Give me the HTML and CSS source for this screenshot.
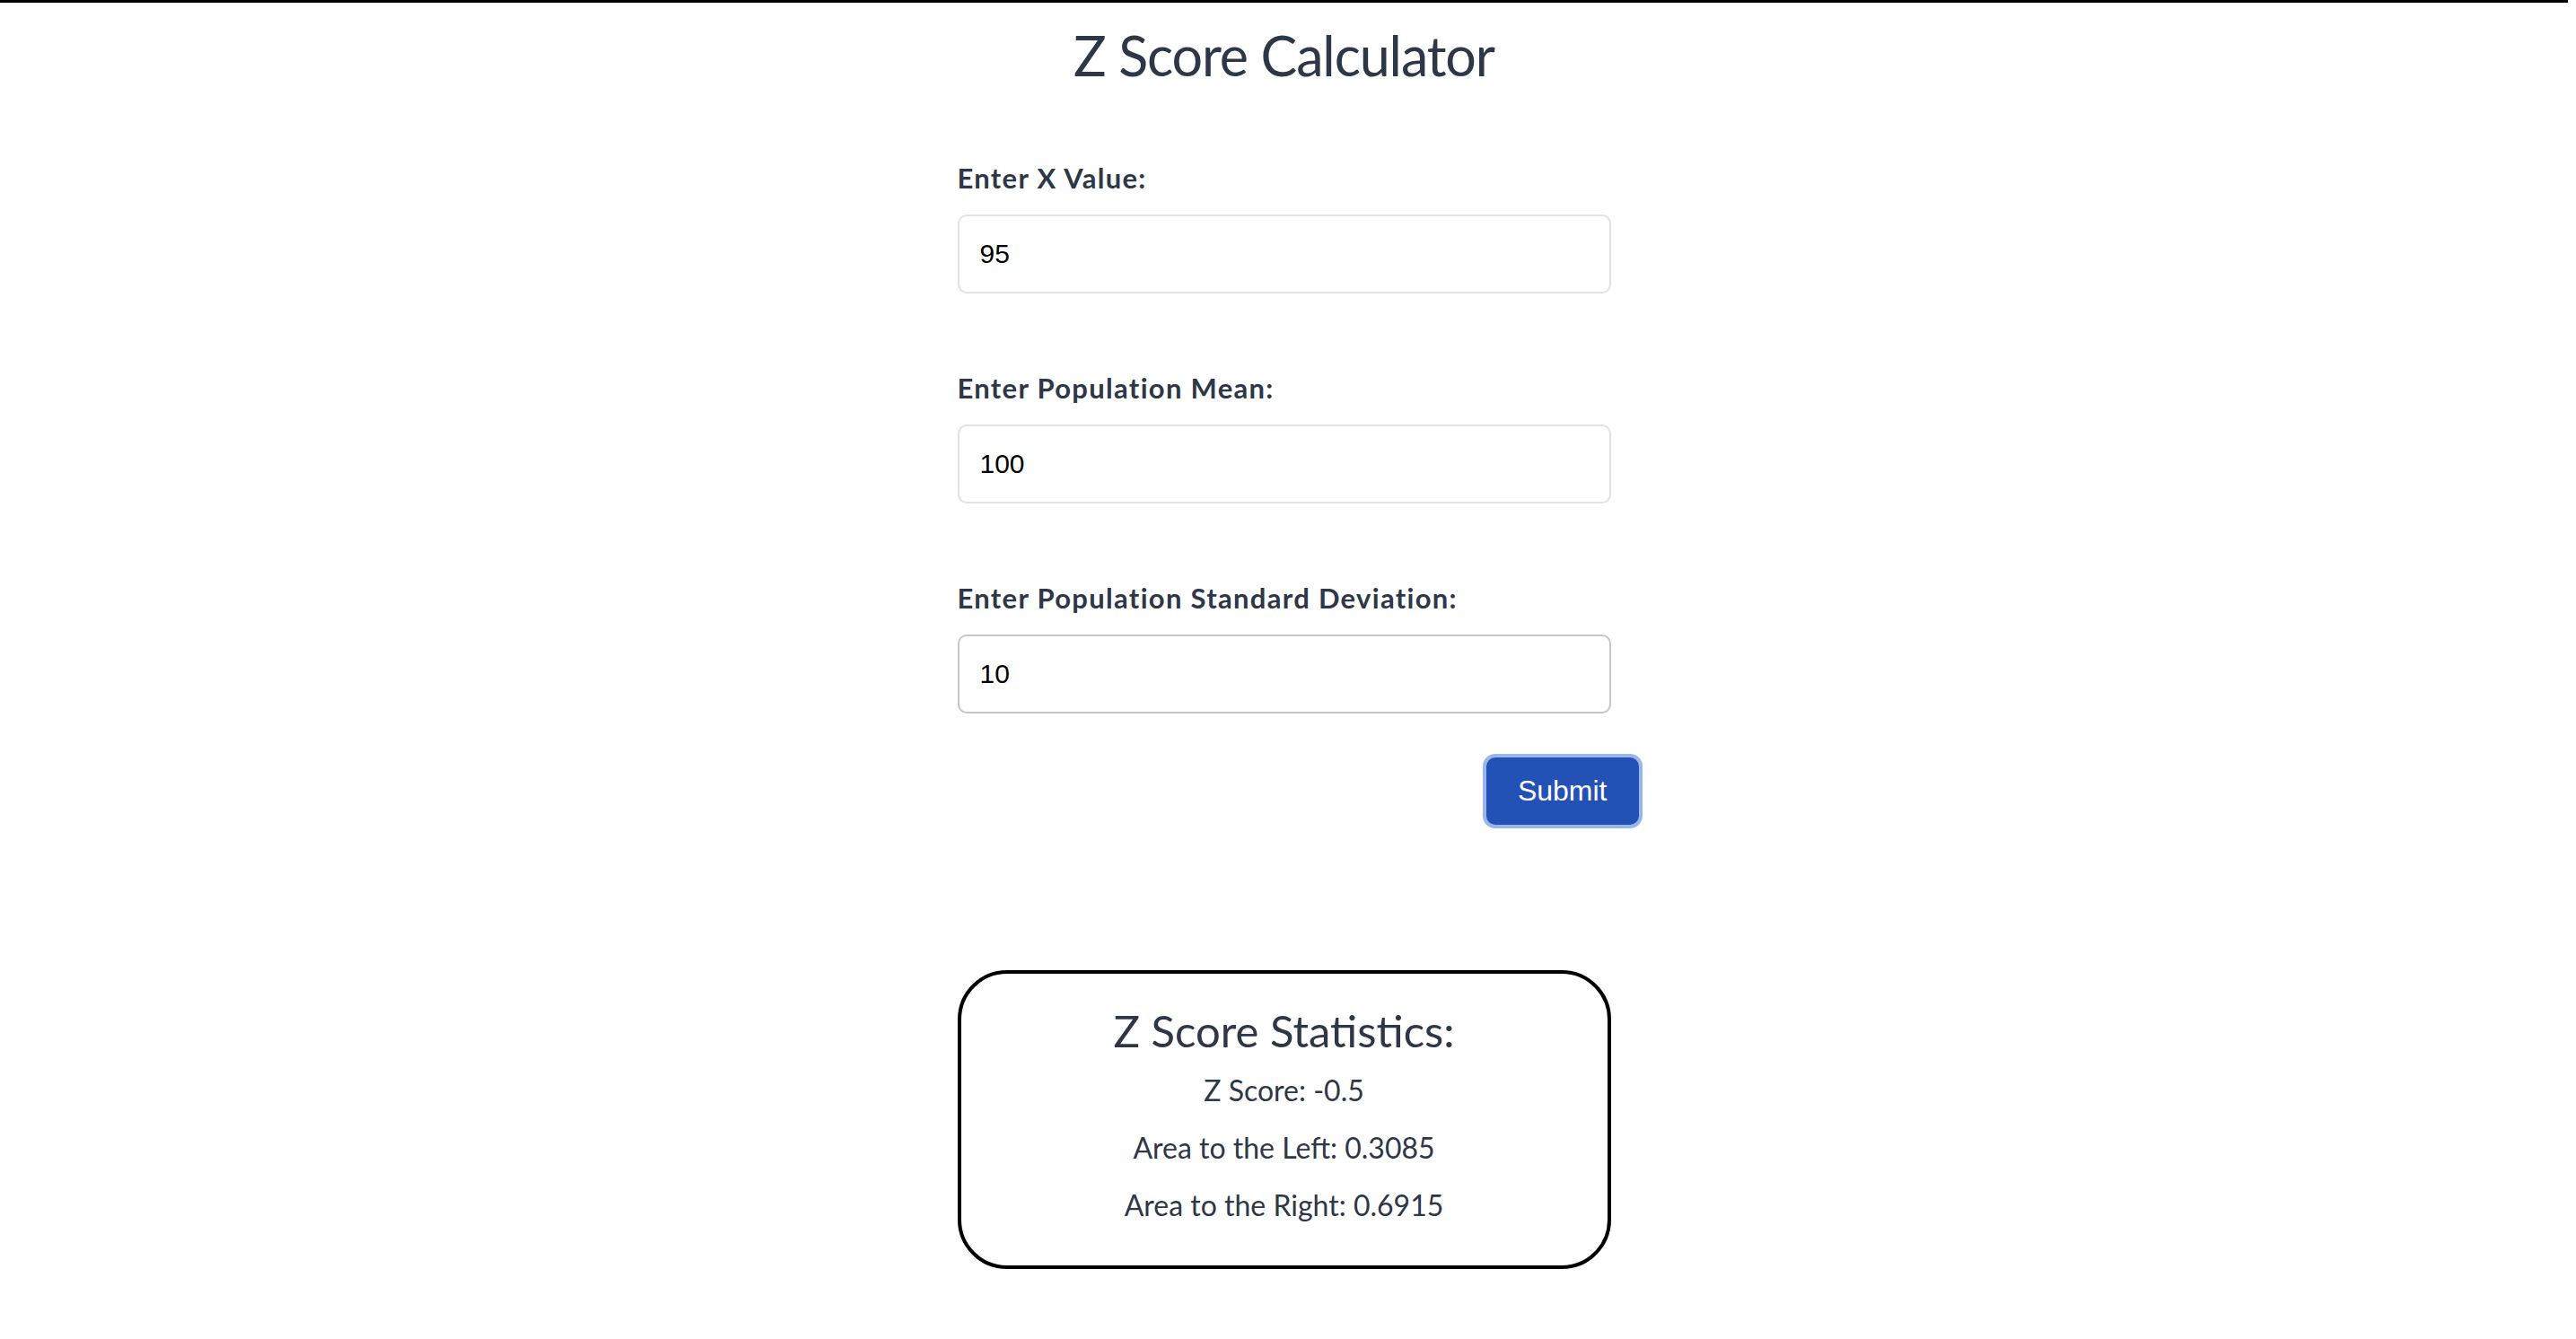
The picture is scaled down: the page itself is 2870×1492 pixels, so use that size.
FILE: index.html
```html
<!DOCTYPE html>
<html lang="en">
<head>
<meta charset="utf-8">
<title>Z Score Calculator</title>
<link rel="stylesheet" href="styles.css">
</head>
<body>
<div class="topbar"></div>
<main class="page">
  <h1 class="title">Z Score Calculator</h1>
  <form class="form">
    <div class="field">
      <label class="label" for="x">Enter X Value:</label>
      <input class="input" id="x" type="text" value="95">
    </div>
    <div class="field">
      <label class="label" for="mean">Enter Population Mean:</label>
      <input class="input" id="mean" type="text" value="100">
    </div>
    <div class="field field-last">
      <label class="label" for="sd">Enter Population Standard Deviation:</label>
      <input class="input input-active" id="sd" type="text" value="10">
    </div>
    <div class="actions">
      <button class="submit" type="button">Submit</button>
    </div>
  </form>
  <section class="stats">
    <h2 class="stats-title">Z Score Statistics:</h2>
    <p class="stat">Z Score: -0.5</p>
    <p class="stat">Area to the Left: 0.3085</p>
    <p class="stat">Area to the Right: 0.6915</p>
  </section>
</main>
</body>
</html>
```
FILE: styles.css
```css
html, body {
  margin: 0;
  padding: 0;
  background: #ffffff;
}
body {
  font-family: "Lato", "Open Sans", sans-serif;
  color: #2d3748;
  padding-right: 9px;
}
.topbar {
  height: 3px;
  background: #000000;
}
.page {
  width: 728px;
  margin: 0 auto;
}
.title {
  margin: 21px 0 0;
  font-size: 61px;
  font-weight: 400;
  line-height: 76px;
  letter-spacing: -1.1px;
  text-align: center;
}
.form {
  display: flex;
  flex-direction: column;
  margin-top: 80px;
}
.field {
  display: flex;
  flex-direction: column;
  margin-bottom: 87px;
}
.field-last {
  margin-bottom: 0;
}
.label {
  font-size: 31px;
  font-weight: 700;
  line-height: 36px;
  letter-spacing: 1.3px;
  margin-bottom: 23px;
}
.input {
  box-sizing: border-box;
  width: 728px;
  height: 88px;
  border: 2px solid #e2e2e2;
  border-radius: 10px;
  padding: 0 23px;
  font-family: "Liberation Sans", Arial, sans-serif;
  font-size: 30px;
  color: #000000;
  background: #ffffff;
  outline: none;
}
.input-active {
  border-color: #c6c6c6;
}
.actions {
  display: flex;
  justify-content: flex-end;
  margin-top: 49px;
  margin-right: -31px;
}
.submit {
  height: 75px;
  padding: 0 35px;
  border: none;
  border-radius: 10px;
  background: #2351b6;
  color: #ffffff;
  font-family: "Liberation Sans", Arial, sans-serif;
  font-size: 32px;
  box-shadow: 0 0 0 4px #98b7e8;
}
.stats {
  box-sizing: border-box;
  margin-top: 162px;
  width: 728px;
  border: 4px solid #000000;
  border-radius: 55px;
  padding: 34px 0 35px;
  text-align: center;
}
.stats-title {
  margin: 0 0 6px;
  font-size: 49px;
  font-weight: 400;
  line-height: 58px;
}
.stat {
  margin: 0;
  font-size: 32px;
  line-height: 64px;
}
```
